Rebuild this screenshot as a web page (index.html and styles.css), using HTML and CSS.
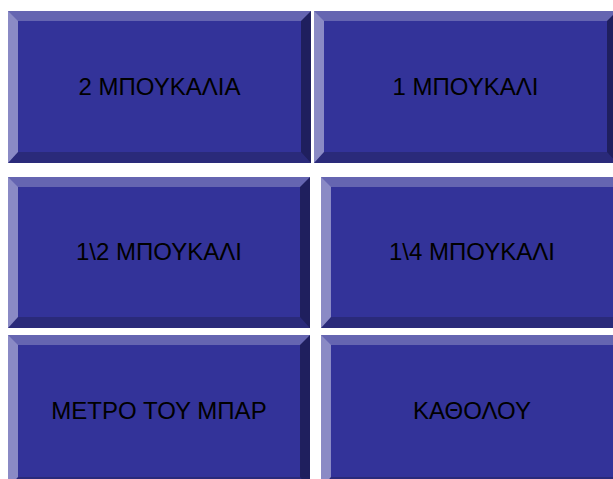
FILE: index.html
```html
<!DOCTYPE html>
<html lang="el">
<head>
<meta charset="utf-8">
<title>Ποσότητα</title>
<link rel="stylesheet" href="styles.css">
</head>
<body>
<main class="panel">
  <div class="row row-first">
    <button class="bevel wide tall">2 ΜΠΟΥΚΑΛΙΑ</button>
    <button class="bevel wide tall">1 ΜΠΟΥΚΑΛΙ</button>
  </div>
  <div class="row row-second">
    <button class="bevel">1\2 ΜΠΟΥΚΑΛΙ</button>
    <button class="bevel">1\4 ΜΠΟΥΚΑΛΙ</button>
  </div>
  <div class="row row-third">
    <button class="bevel last">ΜΕΤΡΟ ΤΟΥ ΜΠΑΡ</button>
    <button class="bevel last">ΚΑΘΟΛΟΥ</button>
  </div>
</main>
</body>
</html>
```

FILE: styles.css
```css
html, body {
  margin: 0;
  padding: 0;
  background: #ffffff;
  overflow: hidden;
}

.panel {
  display: flex;
  flex-direction: column;
  padding: 11px 0 0 8px;
  width: 640px;
}

.row {
  display: flex;
  flex-shrink: 0;
}

.row-first {
  gap: 3px;
}

.row-second {
  gap: 11px;
  margin-top: 14px;
}

.row-third {
  gap: 11px;
  margin-top: 7px;
}

/* raised bevelled key: mitred borders give the sloped corners */
.bevel {
  box-sizing: border-box;
  flex-shrink: 0;
  width: 302px;
  height: 151px;
  margin: 0;
  padding: 0;
  border-style: solid;
  border-width: 10px 10px 11px 10px;
  border-color: #6565b1 #1f1f5e #2a2a7a #8a8ac5;
  background: #333399;
  color: #000000;
  font-family: "Liberation Sans", Arial, sans-serif;
  font-size: 24px;
  line-height: 1;
  text-align: center;
  cursor: pointer;
}

.wide {
  width: 303px;
}

.tall {
  height: 152px;
}

.last {
  height: 153px;
}
```
